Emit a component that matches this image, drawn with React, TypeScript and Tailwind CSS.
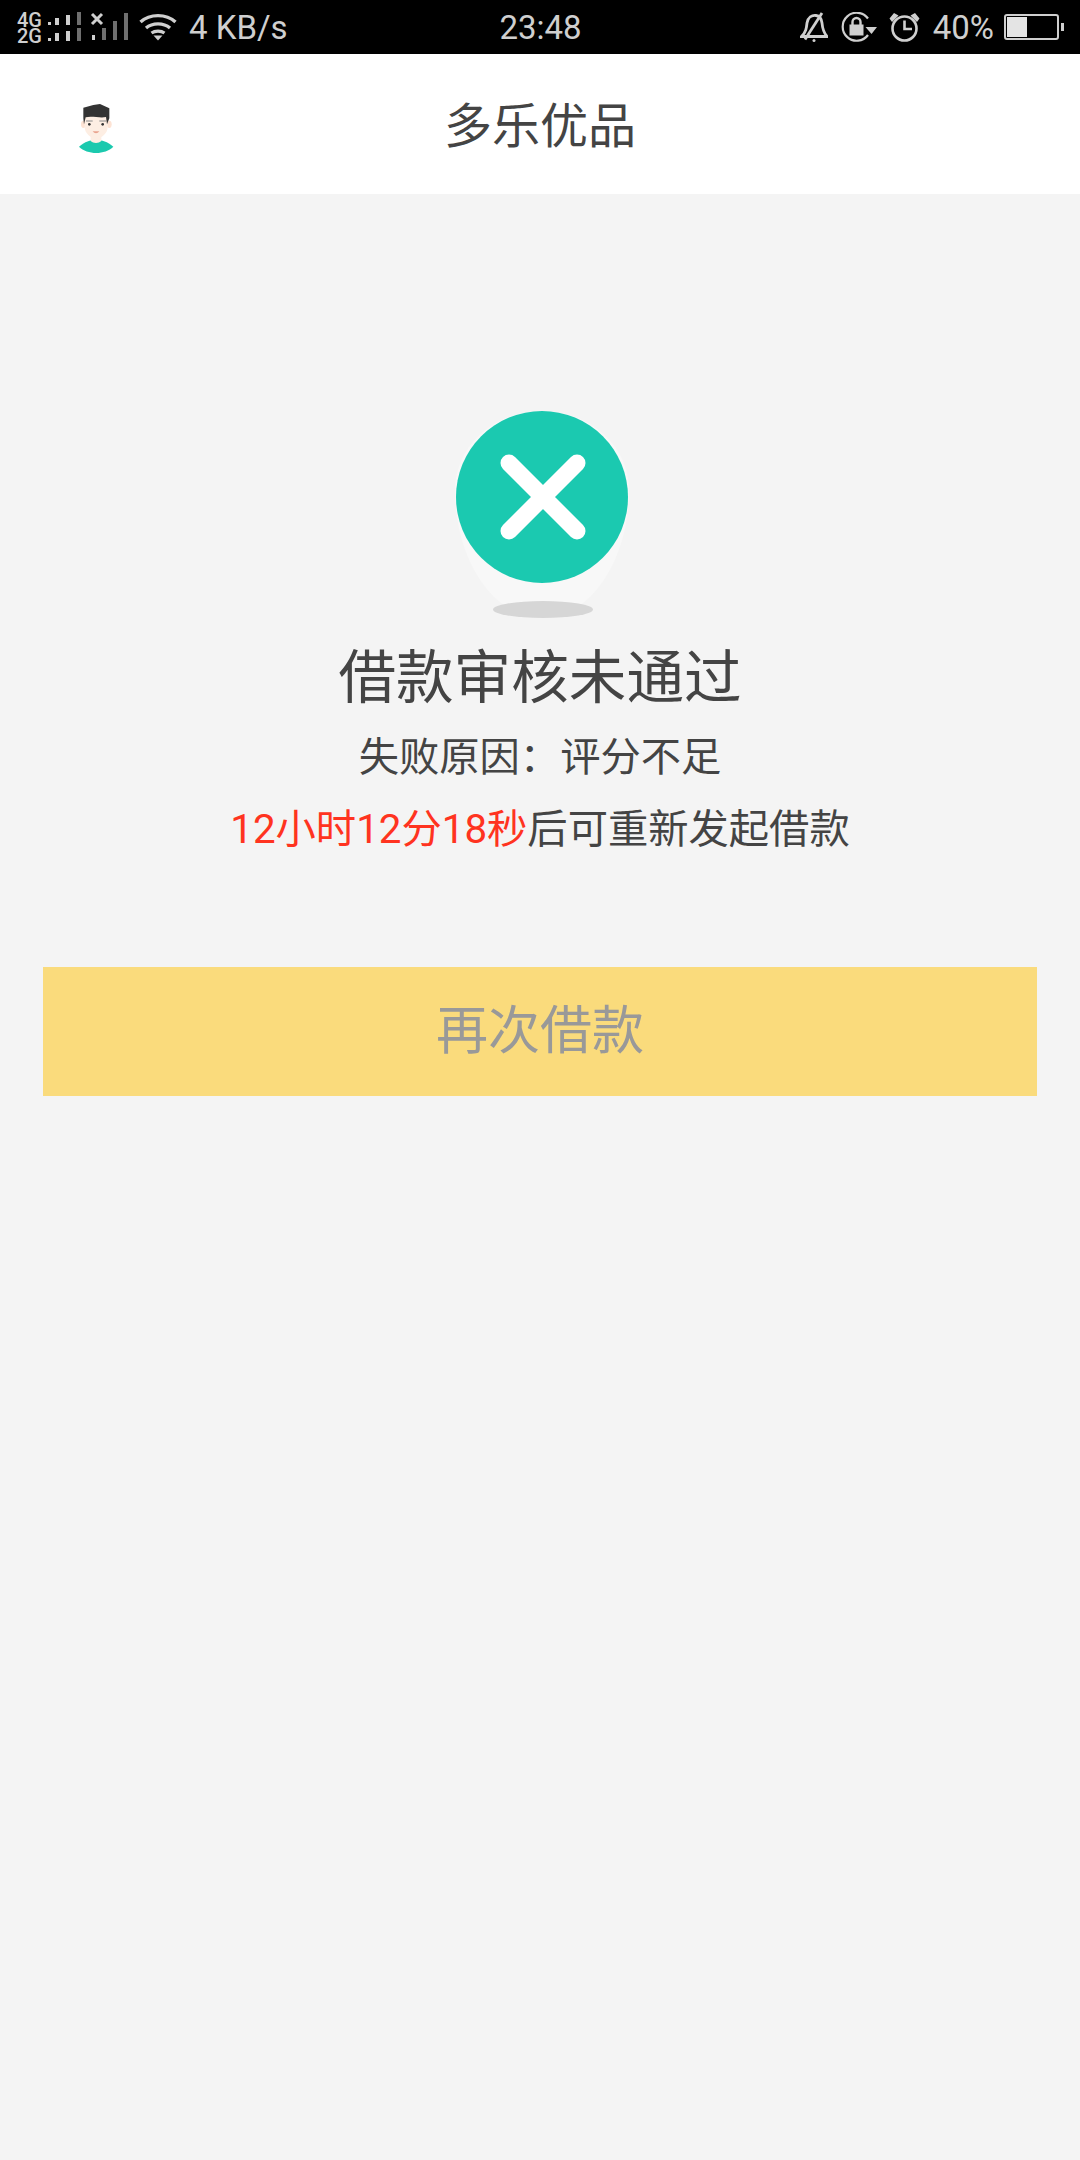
import React from "react";

const CJK = "font-['Roboto','Noto_Sans_CJK_SC',sans-serif]";
const LIGHT = "#cfcfcf";
const DIM = "#6f6f6f";

// 4G/2G signal bars + the empty sim slot with its x
const SignalIcon = () => (
  <svg width="84" height="54" viewBox="0 0 84 54">
    <rect x="2" y="22" width="3" height="3" fill={LIGHT} />
    <rect x="9" y="18" width="4" height="7" fill={LIGHT} />
    <rect x="20" y="15" width="4" height="10" fill={LIGHT} />
    <rect x="31" y="12" width="4" height="13" fill={DIM} />
    <rect x="2" y="38" width="3" height="3" fill={LIGHT} />
    <rect x="9" y="33" width="4" height="8" fill={LIGHT} />
    <rect x="20" y="31" width="4" height="10" fill={LIGHT} />
    <rect x="31" y="28" width="4" height="13" fill={DIM} />
    <path d="M46 14 L56 24 M56 14 L46 24" stroke={LIGHT} strokeWidth="3" />
    <rect x="46" y="35" width="3" height="5" fill={LIGHT} />
    <rect x="56" y="28" width="4" height="12" fill={DIM} />
    <rect x="67" y="21" width="4" height="19" fill={DIM} />
    <rect x="78" y="13" width="4" height="27" fill={DIM} />
  </svg>
);

const WifiIcon = () => (
  <svg width="38" height="28" viewBox="0 0 38 28">
    <path d="M1.5 9 C11 0.5 27 0.5 36.5 9" fill="none" stroke={LIGHT} strokeWidth="3.4" />
    <path d="M7 15 C13.5 9.5 24.5 9.5 31 15" fill="none" stroke={LIGHT} strokeWidth="3.4" />
    <path d="M12.5 20 C16 17.5 22 17.5 25.5 20" fill="none" stroke={LIGHT} strokeWidth="3.2" />
    <path d="M14.5 22.5 H23.5 L19 27.5 Z" fill={LIGHT} />
  </svg>
);

const BellOffIcon = () => (
  <svg width="28" height="30" viewBox="0 0 28 30">
    <path d="M1.5 24.5 C6 20 6.5 16 7 11 C8 5 12 3 16 3.5 C20 4 21.5 7 22 11 C22.5 17 24 21 27 24.5 Z" fill="none" stroke={LIGHT} strokeWidth="2.8" />
    <path d="M5 27.5 L22 1" stroke={LIGHT} strokeWidth="2.8" />
    <circle cx="14" cy="28.5" r="1.5" fill={LIGHT} />
  </svg>
);

const RotationLockIcon = () => (
  <svg width="36" height="30" viewBox="0 0 36 30">
    <path d="M27 23 A14 14 0 1 1 27 6.5" fill="none" stroke={LIGHT} strokeWidth="2.2" />
    <path d="M24.5 15 H36 L30.5 22 Z" fill={LIGHT} />
    <rect x="8.5" y="12.5" width="14" height="11" fill={LIGHT} />
    <path d="M11.5 13 V10 A4 4 0 0 1 19.5 10 V13" fill="none" stroke={LIGHT} strokeWidth="2.4" />
  </svg>
);

const AlarmIcon = () => (
  <svg width="31" height="30" viewBox="0 0 31 30">
    <circle cx="15.5" cy="16.5" r="12" fill="none" stroke={LIGHT} strokeWidth="2.6" />
    <path d="M15.5 8.5 V17 H23" fill="none" stroke={LIGHT} strokeWidth="2.6" />
    <path d="M0.5 6.5 L5 1 L9.5 3.5 L3 10 Z M30.5 6.5 L26 1 L21.5 3.5 L28 10 Z" fill={LIGHT} />
  </svg>
);

const StatusBar = () => (
  <div className="h-[54px] bg-black flex items-center pl-[17px] pr-[16px] font-['Roboto',sans-serif] text-[#cfcfcf]">
    <div className="flex-1 flex items-center">
      <span className="w-[29px] text-[20px] leading-[16px] font-medium whitespace-pre-line mt-[1px]">{"4G\n2G"}</span>
      <SignalIcon />
      <div className="ml-[9px] mt-[-1px]">
        <WifiIcon />
      </div>
      <span className="text-[33px] leading-none ml-[12px]">4 KB/s</span>
    </div>
    <span className="text-[33px] leading-none">23:48</span>
    <div className="flex-1 flex items-center justify-end">
      <BellOffIcon />
      <div className="ml-[13px]">
        <RotationLockIcon />
      </div>
      <div className="ml-[12px]">
        <AlarmIcon />
      </div>
      <span className="text-[33px] leading-none ml-[13px]">40%</span>
      <div className="ml-[10px] w-[55px] h-[26px] border-2 border-[#cfcfcf] rounded-[3px] p-[1px]">
        <div className="w-[20px] h-full bg-[#e4e4e4]" />
      </div>
      <div className="w-[3px] h-[8px] bg-[#cfcfcf] ml-[2px]" />
    </div>
  </div>
);

// drawn on a 3x grid of a 90x80 box
const Avatar = () => (
  <svg width="90" height="80" viewBox="0 0 270 240">
    <path d="M87 185 C105 170 120 165 138 165 C156 165 172 170 190 185 C165 210 112 210 87 185 Z" fill="#1bc9ae" />
    <path d="M122 145 H154 V168 C146 176 130 176 122 168 Z" fill="#fdeee3" />
    <ellipse cx="100" cy="118" rx="7" ry="11" fill="#fde3d4" />
    <ellipse cx="178" cy="118" rx="7" ry="11" fill="#fde3d4" />
    <path d="M104 90 H173 V125 C173 145 155 160 138 160 C122 160 104 145 104 125 Z" fill="#fdeee3" />
    <path d="M100 68 L130 60 L150 57 L178 70 L178 100 L171 118 L168 96 C150 100 125 92 107 97 L102 118 L100 100 Z" fill="#333333" />
    <circle cx="118" cy="118" r="4" fill="#333333" />
    <circle cx="158" cy="118" r="4" fill="#333333" />
    <path d="M108 108 H128 M148 108 H168" stroke="#8a8a8a" strokeWidth="3" />
    <path d="M128 139 C133 147 143 147 148 139 Z" fill="#e9a48f" />
  </svg>
);

const FailIcon = () => (
  <div className="relative w-[174px] h-[212px] ml-[3px]">
    <div className="absolute left-0 top-0 w-[174px] h-[207px] rounded-[87px_87px_87px_87px/79px_79px_128px_128px] bg-[#f8f8f8]" />
    <div className="absolute left-[38px] top-[190px] w-[100px] h-[17px] rounded-[50%] bg-[#d6d6d6]" />
    <div className="absolute left-[1px] top-0 w-[172px] h-[172px] rounded-full bg-[#1bc9b0] flex items-center justify-center">
      <svg width="90" height="90" viewBox="0 0 90 90" className="ml-[2px] mt-[-1px]">
        <path d="M11 11 L79 79 M79 11 L11 79" stroke="#ffffff" strokeWidth="17" strokeLinecap="round" />
      </svg>
    </div>
  </div>
);

export default function App() {
  return (
    <div className={`relative w-[1080px] h-[2160px] bg-[#f4f4f4] ${CJK}`}>
      <StatusBar />
      <header className="relative h-[140px] bg-white flex items-center justify-center">
        <div className="absolute left-[50px] top-[31px]">
          <Avatar />
        </div>
        <h1 className="text-[48px] leading-none text-[#444444] font-normal pt-[5px]">多乐优品</h1>
      </header>
      <main className="flex flex-col items-center pt-[217px]">
        <FailIcon />
        <h2 className="text-[57.6px] leading-[58px] font-normal text-[#444444] mt-[27px]">借款审核未通过</h2>
        <p className="text-[40.3px] leading-[40px] text-[#444444] mt-[30px]">失败原因：评分不足</p>
        <p className="text-[40.3px] leading-[40px] text-[#444444] mt-[32px]">
          <span className="text-[#ff3320]">12小时12分18秒</span>后可重新发起借款
        </p>
        <button className="mt-[117px] w-[994px] h-[129px] bg-[#fadb7c] text-[52px] text-[#999999] leading-none">
          再次借款
        </button>
      </main>
    </div>
  );
}
